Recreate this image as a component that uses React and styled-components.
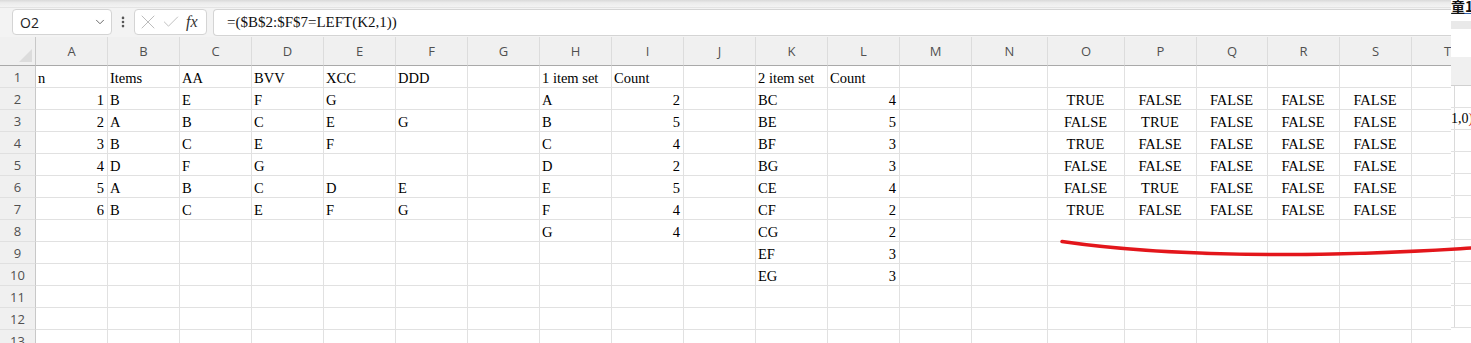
import styled, { createGlobalStyle } from "styled-components";
import { ChevronDown, EllipsisVertical, X, Check } from "lucide-react";

const GlobalStyle = createGlobalStyle`
  body {
    margin: 0;
    background: #ffffff;
    overflow: hidden;
  }
`;

const COLS = ["A", "B", "C", "D", "E", "F", "G", "H", "I", "J", "K", "L", "M", "N", "O", "P", "Q", "R", "S", "T"];

const T = "TRUE";
const F = "FALSE";

const DATA = [
  ["n", "Items", "AA", "BVV", "XCC", "DDD", "", "1 item set", "Count", "", "2 item set", "Count"],
  [1, "B", "E", "F", "G", "", "", "A", 2, "", "BC", 4, "", "", T, F, F, F, F],
  [2, "A", "B", "C", "E", "G", "", "B", 5, "", "BE", 5, "", "", F, T, F, F, F],
  [3, "B", "C", "E", "F", "", "", "C", 4, "", "BF", 3, "", "", T, F, F, F, F],
  [4, "D", "F", "G", "", "", "", "D", 2, "", "BG", 3, "", "", F, F, F, F, F],
  [5, "A", "B", "C", "D", "E", "", "E", 5, "", "CE", 4, "", "", F, T, F, F, F],
  [6, "B", "C", "E", "F", "G", "", "F", 4, "", "CF", 2, "", "", T, F, F, F, F],
  ["", "", "", "", "", "", "", "G", 4, "", "CG", 2],
  ["", "", "", "", "", "", "", "", "", "", "EF", 3],
  ["", "", "", "", "", "", "", "", "", "", "EG", 3],
  [],
  [],
  [],
];

function alignOf(v) {
  if (typeof v === "number") return "right";
  if (v === T || v === F) return "center";
  return "left";
}

function App() {
  return (
    <Page>
      <GlobalStyle />
      <Main>
        <TopShade />
        <FormulaBar>
          <NameBox>
            <span>O2</span>
            <ChevronDown size={14} strokeWidth={1.5} color="#555" />
          </NameBox>
          <Dots>
            <EllipsisVertical size={14} strokeWidth={2.5} color="#555" />
          </Dots>
          <FxBox>
            <X size={24} strokeWidth={0.9} color="#b4b4b4" />
            <Check size={20} strokeWidth={1} color="#b4b4b4" />
            <Fx>fx</Fx>
          </FxBox>
          <FormulaInput>=($B$2:$F$7=LEFT(K2,1))</FormulaInput>
        </FormulaBar>
        <Sheet>
          <Corner />
          {COLS.map((c) => (
            <ColHead key={c}>{c}</ColHead>
          ))}
          {DATA.map((row, r) => (
            <Row key={r} row={row} index={r + 1} />
          ))}
        </Sheet>
      </Main>
      <SideStrip>
        <SideTitle>童1</SideTitle>
        <SideBand />
        <SideHead />
        <SideGrid>
          {Array.from({ length: 11 }).map((_, i) => (
            <SideRow key={i}>{i === 1 ? <>1,0<Red>)</Red></> : ""}</SideRow>
          ))}
        </SideGrid>
      </SideStrip>
      <Overlay width="1471" height="343" viewBox="0 0 1471 343">
        <path
          d="M1062 241.5 C 1120 250, 1180 254, 1270 254.5 S 1420 251, 1471 248"
          fill="none"
          stroke="#e3161b"
          strokeWidth="3.5"
          strokeLinecap="round"
        />
      </Overlay>
    </Page>
  );
}

function Row({ row, index }) {
  return (
    <>
      <RowHead>{index}</RowHead>
      {COLS.map((c, i) => {
        const v = row[i] ?? "";
        return (
          <Cell key={c} $align={alignOf(v)}>
            {v}
          </Cell>
        );
      })}
    </>
  );
}

export default App;

const Page = styled.div`
  position: relative;
  width: 1471px;
  height: 343px;
  display: flex;
  overflow: hidden;
  background: #ffffff;
`;

const Main = styled.div`
  width: 1451px;
  flex: none;
  display: flex;
  flex-direction: column;
  overflow: hidden;
  background: #f3f3f3;
`;

const TopShade = styled.div`
  height: 8px;
  flex: none;
  background: linear-gradient(#d9d9d9, #ececec 40%, #f3f3f3);
  border-bottom: 1px solid #e4e4e4;
  box-sizing: border-box;
`;

const FormulaBar = styled.div`
  height: 29px;
  flex: none;
  display: flex;
  align-items: flex-start;
  padding: 1px 0 0 12px;
  box-sizing: border-box;
  font-family: "Open Sans", "Liberation Sans", sans-serif;
`;

const NameBox = styled.div`
  width: 100px;
  height: 26px;
  box-sizing: border-box;
  border: 1px solid #d4d4d4;
  border-radius: 4px;
  background: #ffffff;
  display: flex;
  align-items: center;
  justify-content: space-between;
  padding: 0 4px 0 7px;
  font-size: 14px;
  color: #222;
`;

const Dots = styled.div`
  width: 22px;
  height: 26px;
  display: flex;
  align-items: center;
  justify-content: center;
`;

const FxBox = styled.div`
  width: 73px;
  height: 26px;
  box-sizing: border-box;
  border: 1px solid #d4d4d4;
  border-radius: 4px;
  background: #ffffff;
  display: flex;
  align-items: center;
  gap: 1px;
  padding: 0 0 0 1px;
`;

const Fx = styled.span`
  font-family: "Liberation Serif", serif;
  font-style: italic;
  font-size: 16px;
  color: #333;
  margin-left: 4px;
`;

const FormulaInput = styled.div`
  flex: 1;
  height: 27px;
  margin-left: 6px;
  box-sizing: border-box;
  border: 1px solid #d4d4d4;
  border-right: none;
  border-radius: 4px 0 0 4px;
  background: #ffffff;
  padding: 0 0 0 13px;
  font-family: "Liberation Serif", serif;
  font-size: 15px;
  line-height: 25px;
  color: #111;
`;

const Sheet = styled.div`
  flex: 1;
  display: grid;
  grid-template-columns: 36px repeat(13, 72px) 76px 77px 72px 71px 72px 72px 72px;
  grid-template-rows: 29px;
  grid-auto-rows: 22px;
  background: #ffffff;
  font-family: "Liberation Serif", serif;
`;

const Corner = styled.div`
  position: relative;
  background: #f0f0f0;
  border-right: 1px solid #c8c8c8;
  border-bottom: 1px solid #a9a9a9;
  box-sizing: border-box;
  &::after {
    content: "";
    position: absolute;
    right: 3px;
    bottom: 3px;
    border-left: 13px solid transparent;
    border-bottom: 13px solid #dcdcdc;
  }
`;

const ColHead = styled.div`
  background: #f0f0f0;
  border-right: 1px solid #dcdcdc;
  border-bottom: 1px solid #a9a9a9;
  box-sizing: border-box;
  display: flex;
  align-items: center;
  justify-content: center;
  font-family: "Open Sans", "Liberation Sans", sans-serif;
  font-size: 13px;
  color: #505050;
`;

const RowHead = styled.div`
  background: #f0f0f0;
  border-right: 1px solid #c8c8c8;
  border-bottom: 1px solid #e0e0e0;
  box-sizing: border-box;
  display: flex;
  align-items: center;
  justify-content: center;
  font-family: "Open Sans", "Liberation Sans", sans-serif;
  font-size: 13px;
  color: #505050;
`;

const Cell = styled.div`
  border-right: 1px solid #e1e1e1;
  border-bottom: 1px solid #e1e1e1;
  box-sizing: border-box;
  padding: 2px 3px 0 2px;
  font-size: 14.5px;
  line-height: 20px;
  color: #000;
  white-space: nowrap;
  overflow: hidden;
  text-align: ${(p) => p.$align};
`;

const SideStrip = styled.div`
  width: 20px;
  flex: none;
  display: flex;
  flex-direction: column;
  background: #ffffff;
  overflow: hidden;
`;

const SideTitle = styled.div`
  height: 14px;
  font-family: "Noto Sans CJK TC", "Noto Sans CJK SC", sans-serif;
  font-weight: bold;
  font-size: 14px;
  line-height: 12px;
  white-space: nowrap;
  color: #111;
  border-bottom: 1px solid #3060a8;
  box-sizing: border-box;
`;

const SideBand = styled.div`
  height: 8px;
  margin-top: 7px;
  background: #e9e9e9;
`;

const SideHead = styled.div`
  height: 28px;
  margin-top: 28px;
  background: #f0f0f0;
  border-bottom: 1px solid #d0d0d0;
`;

const SideGrid = styled.div`
  border-left: 1px solid #dadada;
  margin-left: 3px;
`;

const SideRow = styled.div`
  height: 22px;
  box-sizing: border-box;
  border-bottom: 1px solid #e1e1e1;
  margin-left: -4px;
  font-family: "Liberation Serif", serif;
  font-size: 14px;
  line-height: 22px;
  white-space: nowrap;
  color: #000;
`;

const Red = styled.span`
  color: #d02020;
`;

const Overlay = styled.svg`
  position: absolute;
  left: 0;
  top: 0;
  pointer-events: none;
`;
